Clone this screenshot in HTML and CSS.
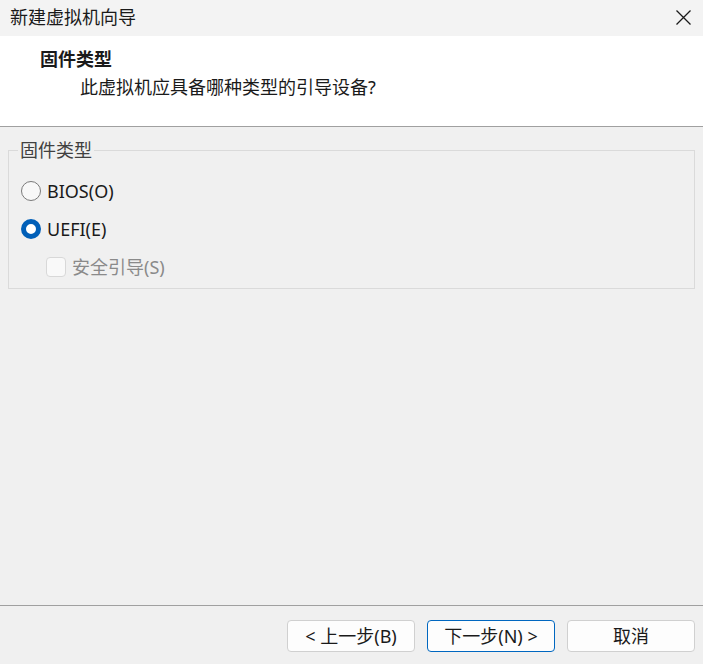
FILE: index.html
```html
<!DOCTYPE html>
<html lang="zh-CN">
<head>
<meta charset="utf-8">
<title>新建虚拟机向导</title>
<link rel="stylesheet" href="styles.css">
</head>
<body>
<div class="window">
  <div class="titlebar">
    <span class="title">新建虚拟机向导</span>
    <span class="close">
      <svg width="15" height="15" viewBox="0 0 15 15"><path d="M0.5 0.5L14.5 14.5M14.5 0.5L0.5 14.5" stroke="#1a1a1a" stroke-width="1.3" fill="none"/></svg>
    </span>
  </div>
  <div class="header">
    <div class="h-title">固件类型</div>
    <div class="h-sub">此虚拟机应具备哪种类型的引导设备?</div>
  </div>
  <div class="content">
    <fieldset class="group">
      <legend class="legend">固件类型</legend>
      <div class="option">
        <span class="radio"></span>
        <span class="label">BIOS(O)</span>
      </div>
      <div class="option">
        <span class="radio checked"></span>
        <span class="label">UEFI(E)</span>
      </div>
      <div class="option sub disabled">
        <span class="checkbox"></span>
        <span class="label">安全引导(S)</span>
      </div>
    </fieldset>
  </div>
  <div class="footer">
    <button class="btn">&lt; 上一步(B)</button>
    <button class="btn primary">下一步(N) &gt;</button>
    <button class="btn">取消</button>
  </div>
</div>
</body>
</html>
```

FILE: styles.css
```css
* { box-sizing: border-box; }
html, body { margin: 0; padding: 0; }
body {
  font-family: "Noto Sans", "Noto Sans CJK SC", sans-serif;
  font-size: 18px;
  color: #1a1a1a;
  background: #f0f0f0;
}
.window {
  width: 703px;
  height: 664px;
  display: flex;
  flex-direction: column;
  background: #f0f0f0;
}
.titlebar {
  height: 36px;
  background: #f3f3f3;
  display: flex;
  align-items: center;
  justify-content: space-between;
  padding: 0 12px 2px 10px;
}
.title { font-size: 18px; line-height: 20px; }
.close { display: flex; }
.header {
  height: 91px;
  background: #ffffff;
  border-bottom: 1px solid #a0a0a0;
  padding: 11px 0 0 40px;
}
.h-title { font-weight: bold; font-size: 18px; line-height: 24px; }
.h-sub { padding-left: 40px; margin-top: 4px; line-height: 24px; }
.content {
  flex: 1;
  padding: 12px 8px 0 8px;
  border-bottom: 1px solid #a0a0a0;
}
.group {
  margin: 0;
  border: 1px solid #dadada;
  padding: 11px 12px 6px 12px;
  height: 150px;
}
.legend {
  padding: 0 2px;
  margin-left: -3px;
  color: #404040;
  line-height: 22px;
}
.option {
  display: flex;
  align-items: center;
  gap: 6px;
  height: 38px;
}
.option.sub { padding-left: 25px; }
.radio {
  width: 20px;
  height: 20px;
  border-radius: 50%;
  border: 1px solid #7a7a7a;
  background: #f8f8f8;
  flex: none;
}
.radio.checked {
  border: 5px solid #005fb8;
  background: #ffffff;
}
.checkbox {
  width: 20px;
  height: 20px;
  border-radius: 4px;
  border: 1px solid #d8d8d8;
  background: #f9f9f9;
  flex: none;
}
.label { line-height: 22px; }
.disabled .label { color: #8a8a8a; }
.footer {
  height: 58px;
  display: flex;
  justify-content: flex-end;
  align-items: flex-start;
  gap: 12px;
  padding: 14px 8px 0 0;
}
.btn {
  width: 128px;
  height: 32px;
  font-family: inherit;
  font-size: 18px;
  color: #1a1a1a;
  background: #fdfdfd;
  border: 1px solid #d0d0d0;
  border-radius: 4px;
  padding: 0;
  line-height: 22px;
}
.btn.primary { border-color: #0067c0; }
```
